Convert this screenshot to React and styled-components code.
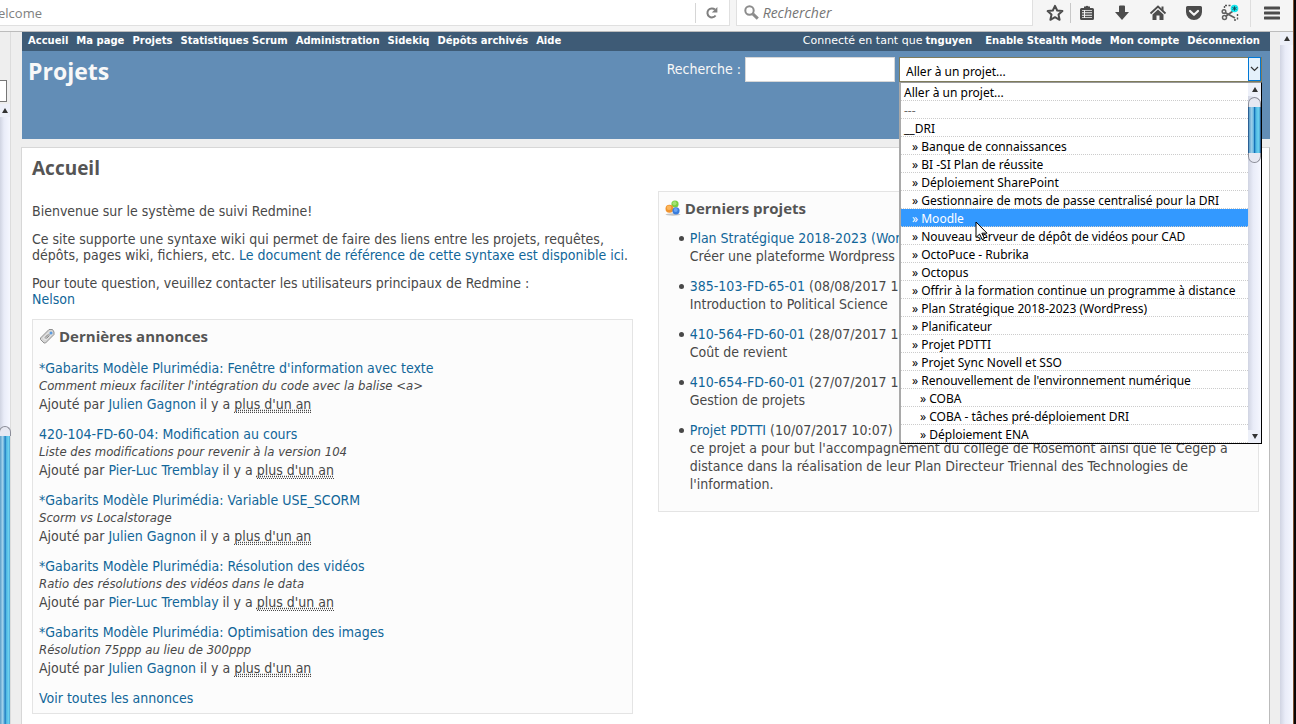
import React from "react";
import styled, { createGlobalStyle, css } from "styled-components";

const annonces = [
    { titre: "*Gabarits Modèle Plurimédia: Fenêtre d'information avec texte", resume: "Comment mieux faciliter l'intégration du code avec la balise <a>", auteur: "Julien Gagnon" },
    { titre: "420-104-FD-60-04: Modification au cours", resume: "Liste des modifications pour revenir à la version 104", auteur: "Pier-Luc Tremblay" },
    { titre: "*Gabarits Modèle Plurimédia: Variable USE_SCORM", resume: "Scorm vs Localstorage", auteur: "Julien Gagnon" },
    { titre: "*Gabarits Modèle Plurimédia: Résolution des vidéos", resume: "Ratio des résolutions des vidéos dans le data", auteur: "Pier-Luc Tremblay" },
    { titre: "*Gabarits Modèle Plurimédia: Optimisation des images", resume: "Résolution 75ppp au lieu de 300ppp", auteur: "Julien Gagnon" },
];

const projets = [
    { nom: "Plan Stratégique 2018-2023 (WordPress)", date: "", description: "Créer une plateforme Wordpress" },
    { nom: "385-103-FD-65-01", date: "(08/08/2017 10:00)", description: "Introduction to Political Science" },
    { nom: "410-564-FD-60-01", date: "(28/07/2017 10:00)", description: "Coût de revient" },
    { nom: "410-654-FD-60-01", date: "(27/07/2017 10:00)", description: "Gestion de projets" },
    { nom: "Projet PDTTI", date: "(10/07/2017 10:07)", description: "ce projet a pour but l'accompagnement du collège de Rosemont ainsi que le Cegep à distance dans la réalisation de leur Plan Directeur Triennal des Technologies de l'information." },
];

const options = [
    { nom: "Aller à un projet...", niveau: 0 },
    { nom: "---", niveau: 0, inactif: true },
    { nom: "__DRI", niveau: 0 },
    { nom: "Banque de connaissances", niveau: 1 },
    { nom: "BI -SI Plan de réussite", niveau: 1 },
    { nom: "Déploiement SharePoint", niveau: 1 },
    { nom: "Gestionnaire de mots de passe centralisé pour la DRI", niveau: 1 },
    { nom: "Moodle", niveau: 1, actif: true },
    { nom: "Nouveau serveur de dépôt de vidéos pour CAD", niveau: 1 },
    { nom: "OctoPuce - Rubrika", niveau: 1 },
    { nom: "Octopus", niveau: 1 },
    { nom: "Offrir à la formation continue un programme à distance", niveau: 1 },
    { nom: "Plan Stratégique 2018-2023 (WordPress)", niveau: 1 },
    { nom: "Planificateur", niveau: 1 },
    { nom: "Projet PDTTI", niveau: 1 },
    { nom: "Projet Sync Novell et SSO", niveau: 1 },
    { nom: "Renouvellement de l'environnement numérique", niveau: 1 },
    { nom: "COBA", niveau: 2 },
    { nom: "COBA - tâches pré-déploiement DRI", niveau: 2 },
    { nom: "Déploiement ENA", niveau: 2 },
];

const menuPrincipal = ["Accueil", "Ma page", "Projets", "Statistiques Scrum", "Administration", "Sidekiq", "Dépôts archivés", "Aide"];
const menuCompte = ["Enable Stealth Mode", "Mon compte", "Déconnexion"];

function BrowserToolbar() {
    return (
        <Toolbar>
            <UrlBar>
                <UrlInput aria-label="Adresse" defaultValue="elcome" />
                <ReloadButton aria-label="Actualiser">
                    <svg width="14" height="14" viewBox="0 0 14 14">
                        <path d="M10.6 9.5A4.5 4.5 0 1 1 10 3.6" fill="none" stroke="#808080" strokeWidth="2" />
                        <path d="M12.4 1v5.6H6.8z" fill="#808080" />
                    </svg>
                </ReloadButton>
            </UrlBar>
            <SearchBar>
                <svg width="15" height="15" viewBox="0 0 15 15">
                    <circle cx="5.5" cy="5.5" r="4.2" fill="none" stroke="#8c8c8c" strokeWidth="2" />
                    <path d="M8.8 8.8l5 4.8" stroke="#8c8c8c" strokeWidth="3" />
                </svg>
                <SearchInput aria-label="Rechercher sur le Web" placeholder="Rechercher" />
            </SearchBar>
            <IconBar>
                <StarButton aria-label="Marque-page">
                    <svg width="18" height="18" viewBox="0 0 18 18">
                        <path d="M9 1.800l2.200 4.700 5.200.6-3.900 3.500 1.100 5.200L9 13.200l-4.600 2.600 1.100-5.200-3.900-3.500 5.200-.6z" fill="none" stroke="#4c4c4c" strokeWidth="2" strokeLinejoin="round" />
                    </svg>
                </StarButton>
                <ListButton aria-label="Liste des marque-pages">
                    <svg width="18" height="18" viewBox="0 0 18 18">
                        <path d="M6 4V2.600h1.600a1.600 1.600 0 0 1 2.800 0H12V4h2.500a1.500 1.500 0 0 1 1.500 1.500v9a1.500 1.500 0 0 1-1.500 1.500h-11A1.500 1.500 0 0 1 2 14.500v-9A1.500 1.500 0 0 1 3.500 4z" fill="#4c4c4c" />
                        <path d="M4 6h10v8H4z" fill="#f5f5f5" />
                        <path d="M4 7.500h2M4 10h2M4 12.500h2M7 7.500h7M7 10h7M7 12.500h7" stroke="#4c4c4c" strokeWidth="1.300" />
                    </svg>
                </ListButton>
                <ToolButton aria-label="Téléchargements">
                    <svg width="18" height="18" viewBox="0 0 18 18">
                        <path d="M6 2.500a1 1 0 0 1 1-1h4a1 1 0 0 1 1 1V8h4l-7 8-7-8h4z" fill="#4c4c4c" />
                    </svg>
                </ToolButton>
                <ToolButton aria-label="Page d'accueil">
                    <svg width="18" height="18" viewBox="0 0 18 18">
                        <path d="M1.500 9.500L9 2.500l7.500 7" fill="none" stroke="#4c4c4c" strokeWidth="1.800" />
                        <path d="M12.500 2.500h2V7l-2-2z" fill="#4c4c4c" />
                        <path d="M3.500 10.500L9 5.500l5.500 5V16h-4v-4.500h-3V16h-4z" fill="#4c4c4c" />
                    </svg>
                </ToolButton>
                <ToolButton aria-label="Pocket">
                    <svg width="18" height="18" viewBox="0 0 18 18">
                        <path d="M2.500 2h13A1.500 1.500 0 0 1 17 3.500V8a8 8 0 0 1-16 0V3.500A1.500 1.500 0 0 1 2.500 2z" fill="#4c4c4c" />
                        <path d="M5 7l4 3.800L13 7" fill="none" stroke="#f5f5f5" strokeWidth="2.200" strokeLinecap="round" strokeLinejoin="round" />
                    </svg>
                </ToolButton>
                <ToolButton aria-label="Capture">
                    <svg width="18" height="18" viewBox="0 0 18 18">
                        <path d="M4 1.500h6M3.500 2v3M16.500 10v6M13 16h3" fill="none" stroke="#555" strokeWidth="1.400" strokeDasharray="2 1.500" />
                        <path d="M4 8.500l10 5.500M4.500 12.500L12 7" fill="none" stroke="#606060" strokeWidth="1.700" />
                        <circle cx="3.500" cy="13.500" r="2" fill="none" stroke="#606060" strokeWidth="1.500" />
                        <circle cx="3" cy="7.500" r="1.800" fill="none" stroke="#606060" strokeWidth="1.500" />
                        <circle cx="13.500" cy="4.500" r="3.800" fill="#13e6ee" />
                        <path d="M13.500 2.300v4.400M11.500 3.500l4 2M15.500 3.500l-4 2" stroke="#13505c" />
                    </svg>
                </ToolButton>
                <MenuButton aria-label="Menu">
                    <svg width="16" height="14" viewBox="0 0 16 14">
                        <path d="M1 2h14M1 7h14M1 12h14" stroke="#4c4c4c" strokeWidth="3" strokeLinecap="round" />
                    </svg>
                </MenuButton>
            </IconBar>
        </Toolbar>
    );
}

function ProjectJump() {
    return (
        <JumpBox>
            <JumpSelect aria-label="Aller à un projet">
                <option>Aller à un projet...</option>
            </JumpSelect>
            <JumpArrow>
                <svg width="9" height="6" viewBox="0 0 9 6">
                    <path d="M1 1l3.500 3.500L8 1" fill="none" stroke="#333" strokeWidth="1.200" />
                </svg>
            </JumpArrow>
            <Popup>
                <OptionList role="listbox" aria-label="Projets">
                    {options.map((o, index) => (
                        <Option key={index} role="option" aria-selected={!!o.actif} $niveau={o.niveau} $actif={o.actif} $inactif={o.inactif}>
                            {o.niveau > 0 ? "» " : ""}{o.nom}
                        </Option>
                    ))}
                </OptionList>
                <PopupScroll>
                    <Arrow $up />
                    <PopupThumb />
                    <Arrow />
                </PopupScroll>
                <Pointer width="13" height="20" viewBox="0 0 13 20">
                    <path d="M1 1v15.500l3.600-3.400 2.600 5.400 2.200-1-2.500-5.300H12z" fill="#fff" stroke="#000" />
                </Pointer>
            </Popup>
        </JumpBox>
    );
}

function Annonces() {
    return (
        <Box>
            <BoxTitle>
                <svg width="16" height="16" viewBox="0 0 16 16">
                    <path d="M10 1.500h3.500L15 4v2.500L6.500 15H5l-3.500-3.500V10z" fill="#d6d6d6" stroke="#8f8f8f" />
                    <path d="M4.500 10l5.500-5.500 2 2L6.500 12z" fill="#bdbdbd" stroke="#f2f2f2" />
                    <path d="M6 9.500l3-3M7.500 10.500l3-3" stroke="#8b8b8b" />
                    <circle cx="12" cy="5" r="1.500" fill="#5b9be0" />
                </svg>
                Dernières annonces
            </BoxTitle>
            {annonces.map((a) => (
                <News key={a.titre}>
                    <Link href="#">{a.titre}</Link>
                    <Summary>{a.resume}</Summary>
                    Ajouté par <Link href="#">{a.auteur}</Link> il y a <Age title="plus d'un an">plus d'un an</Age>
                </News>
            ))}
            <News><Link href="#">Voir toutes les annonces</Link></News>
        </Box>
    );
}

function Projets() {
    return (
        <Box>
            <BoxTitle $compact>
                <svg width="16" height="16" viewBox="0 0 16 16">
                    <ellipse cx="8" cy="14.500" rx="7.500" ry="1.200" fill="#c4c4c4" />
                    <circle cx="10" cy="4" r="3.600" fill="#79cf42" />
                    <circle cx="9.500" cy="3.300" r="2" fill="#a4e272" />
                    <circle cx="4.500" cy="8.800" r="4" fill="#f0932e" />
                    <circle cx="4" cy="7.800" r="2.300" fill="#fbb65c" />
                    <circle cx="11" cy="10.800" r="3.600" fill="#397ddd" />
                    <circle cx="10.700" cy="10" r="2" fill="#6aa4f2" />
                </svg>
                Derniers projets
            </BoxTitle>
            <ProjectList>
                {projets.map((p) => (
                    <ProjectItem key={p.nom}>
                        <Link href="#">{p.nom}</Link> {p.date}
                        <div>{p.description}</div>
                    </ProjectItem>
                ))}
            </ProjectList>
        </Box>
    );
}

function App() {
    return (
        <Screen>
            <GlobalStyle />
            <Window>
                <BrowserToolbar />
                <Viewport>
                    <SidePane>
                        <SideTop><SideField aria-label="Filtre" /></SideTop>
                        <Arrow $up />
                        <SideThumb />
                    </SidePane>
                    <Page>
                        <TopMenu>
                            <MenuList>
                                {menuPrincipal.map((m) => <li key={m}><MenuLink href="#">{m}</MenuLink></li>)}
                            </MenuList>
                            <LoggedAs><span>Connecté en tant que</span> <MenuLink href="#">tnguyen</MenuLink></LoggedAs>
                            <MenuList>
                                {menuCompte.map((m) => <li key={m}><MenuLink href="#">{m}</MenuLink></li>)}
                            </MenuList>
                        </TopMenu>
                        <Header>
                            <SiteTitle>Projets</SiteTitle>
                            <QuickSearch>
                                <label htmlFor="q">Recherche :</label>
                                <QuickInput id="q" />
                                <ProjectJump />
                            </QuickSearch>
                        </Header>
                        <Content>
                            <PageTitle>Accueil</PageTitle>
                            <Columns>
                                <Column>
                                    <Wiki>
                                        <p>Bienvenue sur le système de suivi Redmine!</p>
                                        <p>
                                            Ce site supporte une syntaxe wiki qui permet de faire des liens entre les projets, requêtes, dépôts, pages wiki, fichiers, etc. <Link href="#">Le document de référence de cette syntaxe est disponible ici</Link>.
                                        </p>
                                        <p>
                                            Pour toute question, veuillez contacter les utilisateurs principaux de Redmine :<br />
                                            <Link href="#">Nelson</Link>
                                        </p>
                                    </Wiki>
                                    <Annonces />
                                </Column>
                                <Column>
                                    <Projets />
                                </Column>
                            </Columns>
                        </Content>
                    </Page>
                    <PageScroll>
                        <Arrow $up />
                    </PageScroll>
                </Viewport>
            </Window>
            <Edge />
        </Screen>
    );
}

export default App;


const GlobalStyle = createGlobalStyle`
    * { box-sizing: border-box; }
    body {
        margin: 0;
        overflow: hidden;
        font-family: Verdana, "DejaVu Sans Condensed", sans-serif;
        font-size: 14px;
        color: #484848;
    }
    button, input, select { font: inherit; }
`
const Screen = styled.div`
    display: flex;
    height: 100vh;
    overflow: hidden;
`
const Window = styled.div`
    flex: 1;
    min-width: 0;
    display: flex;
    flex-direction: column;
`
const Edge = styled.div`
    width: 3px;
    background: #0a0606;
    border-left: 1px solid #7c5233;
`

/* browser toolbar */
const Toolbar = styled.div`
    display: flex;
    gap: 6px;
    height: 32px;
    flex-shrink: 0;
    padding-bottom: 5px;
    background: #f5f5f5;
    border-bottom: 1px solid #bcbcbc;
    font-family: "Open Sans", sans-serif;
    font-size: 13px;
`
const field = css`
    display: flex;
    align-items: center;
    background: #fff;
    border: 1px solid #e0e0e0;
    border-top: none;
`
const UrlBar = styled.div`
    ${field}
    flex: 1;
    border-left: none;
`
const UrlInput = styled.input`
    flex: 1;
    min-width: 0;
    margin-left: -2px;
    border: none;
    padding: 0;
    color: #808080;
    outline: none;
`
const ReloadButton = styled.button`
    width: 34px;
    height: 20px;
    padding: 0;
    border: none;
    border-left: 1px solid #d6d6d6;
    background: none;
    display: flex;
    align-items: center;
    justify-content: center;
`
const SearchBar = styled.div`
    ${field}
    width: 23%;
    padding-left: 7px;
    gap: 4px;
`
const SearchInput = styled.input`
    flex: 1;
    min-width: 0;
    border: none;
    padding: 0;
    outline: none;
    font-size: 14px;
    &::placeholder {
        color: #757575;
        font-style: italic;
    }
`
const IconBar = styled.div`
    display: flex;
    align-items: center;
`
const ToolButton = styled.button`
    width: 36px;
    height: 20px;
    padding: 0;
    border: none;
    background: none;
    display: flex;
    align-items: center;
    justify-content: center;
`
const StarButton = styled(ToolButton)`
    width: 31px;
`
const ListButton = styled(ToolButton)`
    width: 32px;
    margin-right: 2px;
    border-left: 1px solid #c8c8c8;
`
const MenuButton = styled(ToolButton)`
    width: 43px;
    height: 27px;
    margin-left: 2px;
    border-left: 1px solid #dedede;
`

/* scrollbars */
const track = css`
    background: linear-gradient(to right, #d0d4e2, #e9ecf8 40%, #f5f7ff);
`
const thumb = css`
    background: linear-gradient(to right, #5b9cc6, #9fd0ea 25%, #62b2dd 42%, #1673b8 50%, #2f8ecb 56%, #4db6e2 62%, #6bd0ee 85%, #4aa5d6);
    border: 1px solid #2b5f94;
    &::before, &::after {
        content: "";
        position: absolute;
        left: -1px;
        right: -1px;
        height: 9px;
        border: 1px solid #8b8d98;
        background: #e6e8f2;
    }
    &::before {
        top: -10px;
        border-bottom: none;
        border-radius: 7px 7px 0 0;
    }
    &::after {
        bottom: -10px;
        border-top: none;
        border-radius: 0 0 7px 7px;
    }
`
const Arrow = styled.div`
    height: 13px;
    display: flex;
    align-items: center;
    justify-content: center;
    background: #edf0f9;
    &::before {
        content: "";
        border: 3px solid transparent;
        ${(p) => p.$up
            ? "border-bottom: 5px solid #333; border-top: none;"
            : "border-top: 5px solid #333; border-bottom: none;"}
    }
`
const PageScroll = styled.div`
    width: 13px;
    flex-shrink: 0;
    ${track}
`

/* left pane, mostly scrolled out */
const Viewport = styled.div`
    flex: 1;
    min-height: 0;
    display: flex;
    overflow: hidden;
    background: #eeeeee;
`
const SidePane = styled.div`
    width: 11px;
    flex-shrink: 0;
    display: flex;
    flex-direction: column;
    ${track}
    border-right: 1px solid #dcdcdc;
`
const SideTop = styled.div`
    height: 72px;
    padding-top: 48px;
    background: #eeeeee;
`
const SideField = styled.input`
    display: block;
    width: 7px;
    height: 22px;
    padding: 0;
    border: 1px solid #777;
    border-left: none;
    background: #fff;
`
const SideThumb = styled.div`
    position: relative;
    flex: 1;
    margin-top: 318px;
    ${thumb}
    border-width: 1px 0 0;
`

/* page */
const Page = styled.div`
    flex: 1;
    min-width: 0;
    padding: 0 10px 0 11px;
`
const TopMenu = styled.nav`
    display: flex;
    align-items: center;
    height: 19px;
    padding: 0 10px 2px 6px;
    background: #3e5b76;
    color: #fff;
    font-family: Verdana, "DejaVu Sans", sans-serif;
    font-size: 10px;
`
const MenuList = styled.ul`
    display: flex;
    gap: 8px;
    margin: 0;
    padding: 0;
    list-style: none;
    white-space: nowrap;
`
const MenuLink = styled.a`
    color: #fff;
    font-weight: bold;
    text-decoration: none;
`
const LoggedAs = styled.div`
    margin-left: auto;
    margin-right: 13px;
    white-space: nowrap;
    span {
        font-size: 11px;
    }
`
const Header = styled.header`
    display: flex;
    justify-content: space-between;
    height: 88px;
    padding: 6px 8px 0 6px;
    background: #628db6;
    color: #f8f8f8;
`
const SiteTitle = styled.h1`
    margin: 0;
    font: bold 23px/28px "Trebuchet MS", "Open Sans", sans-serif;
`
const QuickSearch = styled.div`
    display: flex;
    align-items: flex-start;
    gap: 4px;
    line-height: 24px;
`
const QuickInput = styled.input`
    width: 150px;
    height: 25px;
    border: 1px solid #d7d7d7;
    background: #fff;
`
const JumpBox = styled.div`
    position: relative;
    width: 363px;
    height: 25px;
    color: #000;
    font: 12px/19px Tahoma, "Noto Sans", sans-serif;
`
const JumpSelect = styled.select`
    appearance: none;
    width: 100%;
    height: 100%;
    padding: 3px 6px 0;
    border: 1px solid #7f7c5c;
    border-radius: 0;
    background: #fff;
    color: #000;
`
const JumpArrow = styled.span`
    position: absolute;
    top: 0;
    right: 1px;
    width: 13px;
    height: 24px;
    display: flex;
    align-items: center;
    justify-content: center;
    border: 1px solid #0078d7;
    background: #e5f1fb;
    pointer-events: none;
`
const Popup = styled.div`
    position: absolute;
    top: 25px;
    left: 0;
    right: 0;
    z-index: 2;
    display: flex;
    background: #fff;
    border: 1px solid #000;
    border-top-color: #999;
    border-left: 2px solid #a9a9a9;
`
const OptionList = styled.ul`
    flex: 1;
    min-width: 0;
    margin: 0;
    padding: 0;
    list-style: none;
`
const Option = styled.li`
    height: 18px;
    border-bottom: 1px dotted #ccc;
    padding-left: ${(p) => 3 + p.$niveau * 8}px;
    white-space: nowrap;
    color: ${(p) => (p.$actif ? "#fff" : p.$inactif ? "#6d6d6d" : "#000")};
    background: ${(p) => (p.$actif ? "#3399ff" : "none")};
`
const PopupScroll = styled.div`
    width: 13px;
    display: flex;
    flex-direction: column;
    ${track}
`
const PopupThumb = styled.div`
    position: relative;
    height: 48px;
    margin: 10px 0 auto;
    ${thumb}
`
const Pointer = styled.svg`
    position: absolute;
    left: 74px;
    top: 138px;
`
const Content = styled.main`
    min-height: 100%;
    margin: 8px 0 0 -1px;
    padding: 6px 10px 10px;
    background: #fff;
    border: 1px solid #bbb;
    border-left-color: #d7d7d7;
    border-top-color: #d7d7d7;
`
const PageTitle = styled.h2`
    margin: 0 0 9px;
    font: bold 19px/28px "Trebuchet MS", "Open Sans", sans-serif;
    color: #555;
`
const Columns = styled.div`
    display: grid;
    grid-template-columns: 49% 49%;
    justify-content: space-between;
    align-items: start;
`
const Column = styled.div`
    min-width: 0;
`
const Wiki = styled.div`
    line-height: 16px;
    p {
        margin: 12px 0;
    }
`
const Box = styled.section`
    padding: 6px;
    background: #fcfcfc;
    border: 1px solid #e4e4e4;
    line-height: 18px;
`
const BoxTitle = styled.h3`
    display: flex;
    align-items: center;
    gap: 4px;
    margin: 0 0 ${(p) => (p.$compact ? 11 : 13)}px;
    font: bold 15px/20px "Trebuchet MS", "Open Sans", sans-serif;
    color: #555;
`
const Link = styled.a`
    color: #169;
    text-decoration: none;
`
const News = styled.p`
    margin: 0 0 12px;
    &:last-child {
        margin-bottom: 0;
    }
`
const Summary = styled.span`
    display: block;
    font-size: 13px;
    font-style: italic;
`
const Age = styled.abbr`
    border-bottom: 1px dotted #484848;
    text-decoration: underline dotted;
`
const ProjectList = styled.ul`
    margin: 0;
    padding: 0 0 12px 25px;
    list-style: none;
`
const ProjectItem = styled.li`
    margin-bottom: 12px;
    &:last-child {
        margin-bottom: 0;
    }
    &::before {
        content: "";
        display: inline-block;
        width: 5px;
        height: 5px;
        margin: 0 6px 0 -11px;
        border-radius: 50%;
        background: #484848;
        vertical-align: 2px;
    }
`
